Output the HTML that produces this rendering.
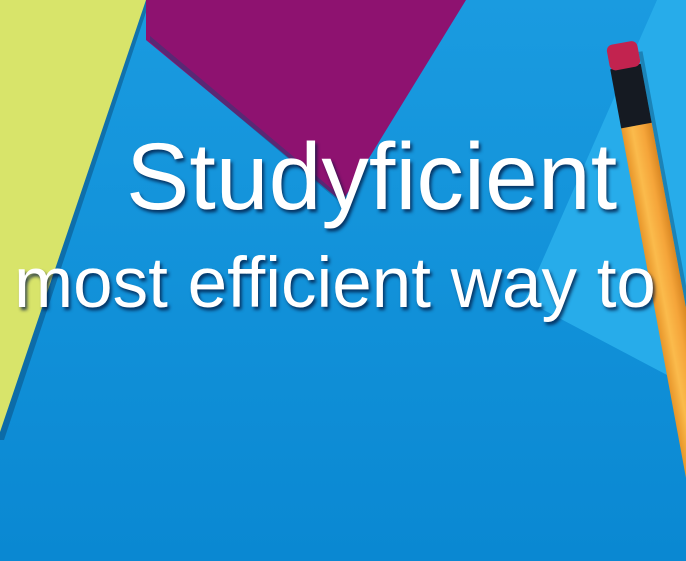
<!DOCTYPE html>
<html><head><meta charset="utf-8"><style>
html,body{margin:0;padding:0;width:686px;height:561px;overflow:hidden}
body{position:relative;background:#0f8fd6;font-family:"Liberation Sans",Arial,sans-serif}
svg{position:absolute;left:0;top:0}
.t{position:absolute;color:#fff;white-space:nowrap;text-shadow:2px 3px 3px rgba(0,20,60,.75)}
</style></head><body>
<svg width="686" height="561" viewBox="0 0 686 561">
<defs>
<linearGradient id="bg" x1="0" y1="0" x2="0" y2="1"><stop offset="0" stop-color="#1a9be0"/><stop offset="1" stop-color="#0a88d2"/></linearGradient>
<linearGradient id="pen" x1="0" y1="0" x2="1" y2="0"><stop offset="0" stop-color="#e8962a"/><stop offset=".35" stop-color="#fbbb4c"/><stop offset=".7" stop-color="#f5a53a"/><stop offset="1" stop-color="#d98722"/></linearGradient>
</defs>
<rect width="686" height="561" fill="url(#bg)"/>
<polygon points="657,0 686,0 686,385 540,308 525,300" fill="#27acea"/>
<polygon points="0,0 150,0 4,440 0,440" fill="#0a4a7a" opacity=".5"/>
<polygon points="0,0 146,0 0,432" fill="#d8e46a"/>
<polygon points="146,0 466,0 342,202 146,40" fill="#8e1270"/>
<polygon points="150,42 342,204 345,200 150,36" fill="#0a4a7a" opacity=".4"/>
<g transform="translate(621,45) rotate(-10.5)">
<rect x="16" y="10" width="4" height="470" fill="#06365a" opacity=".35"/>
<rect x="-15" y="80" width="31" height="400" fill="url(#pen)"/>
<rect x="-15" y="22" width="31" height="60" fill="#151a22"/>
<rect x="-15" y="-2" width="31" height="26" rx="6" fill="#c2234f"/>
</g>
</svg>
<div class="t" style="left:126px;top:127px;font-size:95px;line-height:100px">Studyficient</div>
<div class="t" style="left:14px;top:244px;font-size:71px;line-height:80px">most efficient way to</div>
</body></html>
